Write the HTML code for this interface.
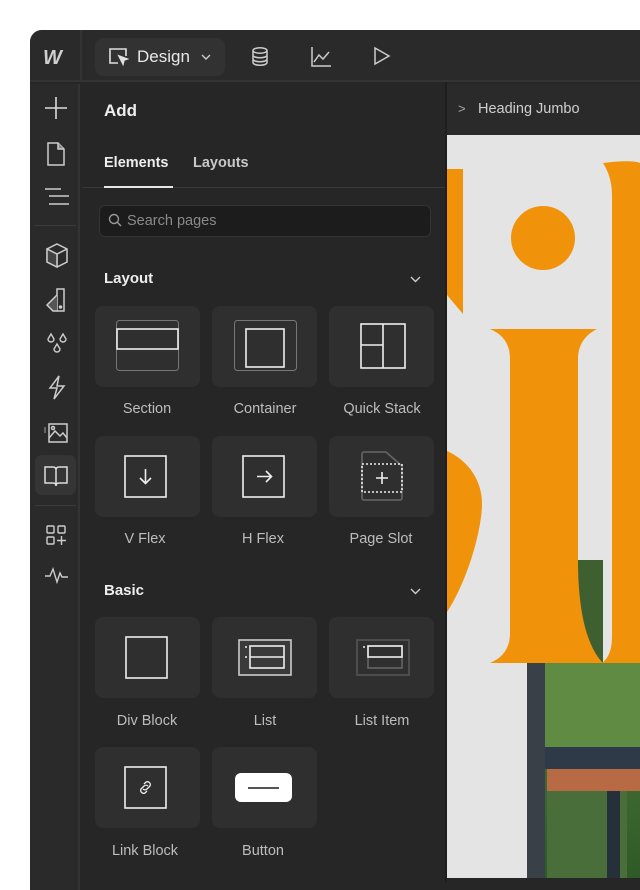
<!DOCTYPE html>
<html><head><meta charset="utf-8"><style>
*{margin:0;padding:0;box-sizing:border-box}
body{width:640px;height:878px;background:#fff;position:relative;overflow:hidden;font-family:"Liberation Sans",sans-serif}
.win{position:absolute;left:30px;top:30px;width:620px;height:860px;background:#262626;border-top-left-radius:12px;overflow:hidden}
.top{position:absolute;left:0;top:0;right:0;height:52px;background:#2a2a2a;border-bottom:2px solid #343434}
.rail{position:absolute;left:0;top:54px;width:50px;bottom:0;background:#2a2a2a;border-right:2px solid #343434}
.vline{position:absolute;left:50px;top:0;width:2px;height:52px;background:#343434}
.abs{position:absolute}
.txt{color:#e8e8e8;font-size:15px}
.card{position:absolute;width:105px;height:81px;background:#2f2f2f;border-radius:8px}
.lbl{position:absolute;width:118px;text-align:center;color:#bdbdbd;font-size:14.5px}
svg{position:absolute;overflow:visible}
</style></head><body>
<div class="win">
 <div class="top"></div>
 <div class="vline"></div>
 <div class="rail"></div>
</div>
<!-- logo -->
<div class="abs" style="left:43px;top:47px;color:#cfcfcf;font:italic 900 20px 'Liberation Sans',sans-serif;letter-spacing:-3px">W</div>
<!-- design button -->
<div class="abs" style="left:95px;top:38px;width:130px;height:38px;background:#323232;border-radius:8px"></div>
<svg style="left:109px;top:48px" width="20" height="18" fill="none" stroke="#e0e0e0" stroke-width="1.6"><path d="M9 15H1V1h16v7"/><path d="M10 8l8 3-3 1-1 4z" fill="#e0e0e0"/></svg>
<div class="abs txt" style="left:137px;top:47px;font-size:17px">Design</div>
<svg style="left:201px;top:54px" width="10" height="6" fill="none" stroke="#ccc" stroke-width="1.4"><path d="M1 1l4 4 4-4"/></svg>
<svg style="left:251px;top:47px" width="18" height="20" fill="none" stroke="#ccc" stroke-width="1.5"><ellipse cx="9" cy="3.5" rx="7" ry="2.8"/><path d="M2 3.5v12c0 1.6 3 2.8 7 2.8s7-1.2 7-2.8v-12M2 8c0 1.6 3 2.8 7 2.8s7-1.2 7-2.8M2 12c0 1.6 3 2.8 7 2.8s7-1.2 7-2.8"/></svg>
<svg style="left:311px;top:47px" width="20" height="20" fill="none" stroke="#ccc" stroke-width="1.5"><path d="M1 0v19h19M3 15l5-7 4 4 6-7"/></svg>
<svg style="left:374px;top:47px" width="16" height="18" fill="none" stroke="#ccc" stroke-width="1.5"><path d="M1 1l14 8-14 8z"/></svg>
<!-- rail icons -->
<svg style="left:45px;top:97px" width="22" height="22" stroke="#ddd" stroke-width="1.6"><path d="M11 0v22M0 11h22"/></svg>
<svg style="left:47px;top:142px" width="18" height="24" fill="none" stroke="#ccc" stroke-width="1.5"><path d="M1 1h10l6 6v16H1z"/><path d="M11 1v6h6" fill="#888"/></svg>
<svg style="left:44px;top:188px" width="26" height="18" stroke="#ccc" stroke-width="1.5"><path d="M1 1h16M5 8h20M5 16h20"/></svg>
<div class="abs" style="left:34px;top:225px;width:42px;height:1px;background:#3a3a3a"></div>
<svg style="left:45px;top:243px" width="24" height="26" fill="none" stroke="#ccc" stroke-width="1.5"><path d="M12 1l10 5v13l-10 5-10-5V6zM2 6l10 5 10-5M12 11v13"/><path d="M12 11l-10-5v13l10 5z" fill="#555" opacity=".6"/></svg>
<svg style="left:45px;top:288px" width="24" height="26" fill="none" stroke="#ccc" stroke-width="1.5"><path d="M12 1h7v22h-7z"/><path d="M12 7l-10 10 6 6h4" fill="#555"/><circle cx="15.5" cy="19" r="1" fill="#ccc"/></svg>
<svg style="left:45px;top:332px" width="24" height="26" fill="none" stroke="#ccc" stroke-width="1.4"><path d="M6 2l-3 5a3 3 0 006 0zM18 2l-3 5a3 3 0 006 0zM12 12l-3 5a3 3 0 006 0z"/></svg>
<svg style="left:47px;top:375px" width="20" height="26" fill="none" stroke="#ccc" stroke-width="1.5"><path d="M12 1L3 13h7l-3 11 10-13h-7z"/></svg>
<svg style="left:44px;top:418px" width="26" height="26" fill="none" stroke="#ccc" stroke-width="1.5"><path d="M5 6h18v18H5z"/><path d="M5 20l6-7 5 5 3-3 4 5"/><circle cx="9" cy="10" r="1.5"/><path d="M1 9v6" stroke="#777"/></svg>
<div class="abs" style="left:35px;top:455px;width:41px;height:40px;background:#353535;border-radius:7px"></div>
<svg style="left:44px;top:465px" width="24" height="22" fill="none" stroke="#ddd" stroke-width="1.5"><path d="M1 2h8c2 0 3 1 3 3v16c0-2-1-3-3-3H1zM23 2h-8c-2 0-3 1-3 3v16c0-2 1-3 3-3h8z"/></svg>
<div class="abs" style="left:35px;top:505px;width:41px;height:1px;background:#3a3a3a"></div>
<svg style="left:46px;top:525px" width="22" height="22" fill="none" stroke="#ccc" stroke-width="1.4"><rect x="1" y="1" width="7" height="7" rx="1"/><rect x="12" y="1" width="7" height="7" rx="1"/><rect x="1" y="12" width="7" height="7" rx="1"/><path d="M15.5 11v9M11 15.5h9"/></svg>
<svg style="left:44px;top:567px" width="26" height="16" fill="none" stroke="#ccc" stroke-width="1.4"><path d="M1 9h5l3-7 4 13 3-9 2 4h6"/></svg>
<!-- panel -->
<div class="abs" style="left:104px;top:101px;color:#eee;font-size:17px;font-weight:bold">Add</div>
<div class="abs" style="left:104px;top:155px;color:#eee;font-size:14.5px;font-weight:bold">Elements</div>
<div class="abs" style="left:193px;top:155px;color:#c8c8c8;font-size:14.5px;font-weight:bold">Layouts</div>
<div class="abs" style="left:82px;top:187px;width:363px;height:1px;background:#383838"></div>
<div class="abs" style="left:104px;top:186px;width:69px;height:2px;background:#e6e6e6"></div>
<div class="abs" style="left:99px;top:205px;width:332px;height:32px;background:#1c1c1c;border:1px solid #333;border-radius:6px"></div>
<svg style="left:108px;top:213px" width="14" height="14" fill="none" stroke="#999" stroke-width="1.4"><circle cx="6" cy="6" r="4.5"/><path d="M9.5 9.5L13 13"/></svg>
<div class="abs" style="left:127px;top:213px;color:#8a8a8a;font-size:14.5px">Search pages</div>
<div class="abs" style="left:104px;top:270px;color:#eee;font-size:15px;font-weight:bold">Layout</div>
<svg style="left:410px;top:276px" width="11" height="7" fill="none" stroke="#ccc" stroke-width="1.4"><path d="M1 1l4.5 4.5L10 1"/></svg>
<div class="abs" style="left:104px;top:582px;color:#eee;font-size:15px;font-weight:bold">Basic</div>
<svg style="left:410px;top:588px" width="11" height="7" fill="none" stroke="#ccc" stroke-width="1.4"><path d="M1 1l4.5 4.5L10 1"/></svg>
<div class="abs" style="left:445px;top:82px;width:2px;height:800px;background:#1e1e1e"></div>

<!-- cards -->
<div class="card" style="left:95px;top:306px"></div>
<div class="card" style="left:212px;top:306px"></div>
<div class="card" style="left:329px;top:306px"></div>
<div class="card" style="left:95px;top:436px"></div>
<div class="card" style="left:212px;top:436px"></div>
<div class="card" style="left:329px;top:436px"></div>
<div class="card" style="left:95px;top:617px"></div>
<div class="card" style="left:212px;top:617px"></div>
<div class="card" style="left:329px;top:617px"></div>
<div class="card" style="left:95px;top:747px"></div>
<div class="card" style="left:212px;top:747px"></div>

<svg style="left:116px;top:320px" width="64" height="52" fill="none"><rect x="0.5" y="0.5" width="62" height="50" rx="3" stroke="#777"/><rect x="1" y="9" width="61" height="20" stroke="#eee" stroke-width="1.6"/></svg>
<svg style="left:234px;top:320px" width="64" height="52" fill="none"><rect x="0.5" y="0.5" width="62" height="50" rx="3" stroke="#777"/><rect x="12" y="9" width="38" height="38" stroke="#eee" stroke-width="1.6"/></svg>
<svg style="left:360px;top:323px" width="46" height="46" fill="none" stroke="#eee" stroke-width="1.6"><rect x="1" y="1" width="44" height="44"/><path d="M23 1v44M1 22h22"/></svg>
<svg style="left:124px;top:455px" width="43" height="43" fill="none" stroke="#eee" stroke-width="1.6"><rect x="1" y="1" width="41" height="41"/><path d="M21.5 14v14M16 23l5.5 5.5L27 23"/></svg>
<svg style="left:242px;top:455px" width="43" height="43" fill="none" stroke="#eee" stroke-width="1.6"><rect x="1" y="1" width="41" height="41"/><path d="M15 21.5h14M24 16l5.5 5.5L24 27"/></svg>
<svg style="left:360px;top:451px" width="44" height="50" fill="none" stroke-width="1.6"><path d="M4 1h22l16 14v32a2 2 0 01-2 2H4a2 2 0 01-2-2V3a2 2 0 012-2z" stroke="#666"/><rect x="2" y="13" width="40" height="28" stroke="#eee" stroke-dasharray="2 2"/><path d="M22 21v12M16 27h12" stroke="#eee"/></svg>
<svg style="left:125px;top:636px" width="43" height="43" fill="none" stroke="#eee" stroke-width="1.6"><rect x="1" y="1" width="41" height="41"/></svg>
<svg style="left:238px;top:639px" width="54" height="38" fill="none" stroke-width="1.6"><rect x="1" y="1" width="52" height="35" stroke="#ccc" fill="#3a3a3a"/><rect x="12" y="7" width="34" height="22" stroke="#eee"/><path d="M12 18h34" stroke="#eee"/><circle cx="8" cy="8" r="1" fill="#eee"/><circle cx="8" cy="18" r="1" fill="#eee"/></svg>
<svg style="left:356px;top:639px" width="54" height="38" fill="none" stroke-width="1.6"><rect x="1" y="1" width="52" height="35" stroke="#555"/><rect x="12" y="7" width="34" height="22" stroke="#666"/><rect x="12" y="7" width="34" height="11" stroke="#eee"/><circle cx="8" cy="8" r="1" fill="#eee"/></svg>
<svg style="left:124px;top:766px" width="43" height="43" fill="none" stroke="#eee" stroke-width="1.6"><rect x="1" y="1" width="41" height="41"/><path d="M20 18l2-2a3 3 0 014 4l-3 3a3 3 0 01-4 0M23 25l-2 2a3 3 0 01-4-4l3-3a3 3 0 014 0" stroke-width="1.3"/></svg>
<div class="abs" style="left:235px;top:773px;width:57px;height:29px;background:#fff;border-radius:6px"></div>
<div class="abs" style="left:248px;top:787px;width:31px;height:1.5px;background:#555"></div>

<div class="lbl" style="left:88px;top:401px">Section</div>
<div class="lbl" style="left:206px;top:401px">Container</div>
<div class="lbl" style="left:323px;top:401px">Quick Stack</div>
<div class="lbl" style="left:86px;top:531px">V Flex</div>
<div class="lbl" style="left:204px;top:531px">H Flex</div>
<div class="lbl" style="left:322px;top:531px">Page Slot</div>
<div class="lbl" style="left:88px;top:713px">Div Block</div>
<div class="lbl" style="left:206px;top:713px">List</div>
<div class="lbl" style="left:323px;top:713px">List Item</div>
<div class="lbl" style="left:86px;top:843px">Link Block</div>
<div class="lbl" style="left:204px;top:843px">Button</div>

<!-- canvas -->
<div class="abs" style="left:447px;top:84px;width:193px;height:51px;background:#2a2a2a"></div>
<div class="abs" style="left:458px;top:101px;color:#aaa;font-size:13px">&gt;</div>
<div class="abs" style="left:478px;top:101px;color:#cfcfcf;font-size:14.5px">Heading Jumbo</div>
<svg style="left:447px;top:135px" width="193" height="743">
 <defs><linearGradient id="tr" x1="0" y1="0" x2="0" y2="1"><stop offset="0" stop-color="#4f7a3a"/><stop offset="1" stop-color="#2f5a28"/></linearGradient></defs>
 <rect width="193" height="743" fill="#e4e4e4"/>
 <!-- photo -->
 <rect x="80" y="528" width="113" height="215" fill="url(#tr)"/>
 <rect x="80" y="528" width="113" height="85" fill="#5f8b42"/>
 <rect x="80" y="612" width="113" height="22" fill="#2e3a48"/>
 <rect x="100" y="634" width="93" height="22" fill="#b86a45"/>
 <rect x="100" y="656" width="80" height="87" fill="#4a6e3a"/>
 <rect x="160" y="656" width="13" height="87" fill="#25303a"/>
 <rect x="80" y="528" width="18" height="215" fill="#3a4048"/>
 <rect x="131" y="425" width="25" height="103" fill="#3e6030"/>
 <!-- s part -->
 <path d="M0 34h16v145L0 160z" fill="#f0930a"/>
 <path d="M0 316c22 10 35 30 35 53s-13 74-35 108z" fill="#f0930a"/>
 <!-- i -->
 <circle cx="96" cy="103" r="32" fill="#f0930a"/>
 <path d="M43 194h107c-12 6-19 16-19 30v304H43c14-6 20-16 20-30V224c0-14-6-24-20-30z" fill="#f0930a"/>
 <!-- l -->
 <path d="M156 28c30-4 37 0 37 0v500h-38c10-8 10-20 10-30V60c0-14-4-24-9-32z" fill="#f0930a"/>
 <path d="M131 425c0 60 12 90 25 103h-25z" fill="#f0930a"/>
</svg>
</body></html>
